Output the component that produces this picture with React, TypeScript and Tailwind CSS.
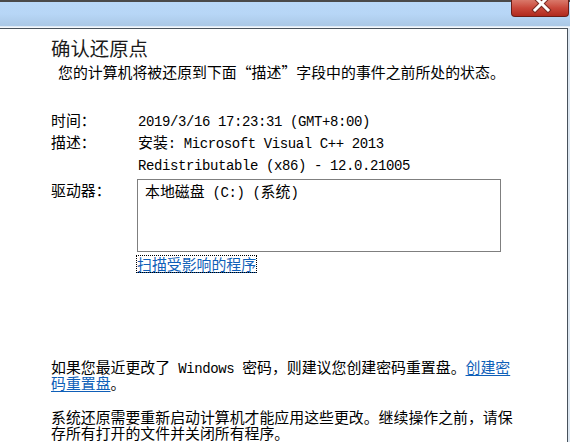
import React from "react";

const A = ({ children }: { children: React.ReactNode }) => (
  <span className="font-['Liberation_Mono',monospace] text-[14px] tracking-[-0.4px] leading-[0px]">{children}</span>
);

const Q = ({ children }: { children: React.ReactNode }) => (
  <span className="[font-feature-settings:'fwid']">{children}</span>
);

const Line = ({ h, children }: { h: string; children: React.ReactNode }) => (
  <div className={`${h} whitespace-nowrap`}>{children}</div>
);

export default function App() {
  return (
    <div className="relative w-[570px] h-[442px] overflow-hidden bg-white text-black font-['Noto_Sans_CJK_SC','Noto_Sans',sans-serif] text-[14.9px]">
      <div className="h-[2px] bg-[#4a4a4a]" />
      <div className="h-[24px] bg-gradient-to-b from-[#b9d8f8] via-[#b7d6f6] to-[#aac8e6]" />
      <div className="h-px bg-[#dfeaf5]" />
      <div className="h-px bg-[#f4f8fc]" />
      <div className="flex">
        <div className="w-[568px] h-[414px] border-t border-r border-[#48525c] bg-white pl-[51px] flex flex-col">
          <div className="mt-[6px] h-[26px] text-[19.4px] leading-[26px] text-[#1b1b1b] whitespace-nowrap">
            确认还原点
          </div>
          <div className="mt-px h-[20px] pl-[7px] leading-[20px] whitespace-nowrap">
            您的计算机将被还原到下面<Q>“</Q>描述<Q>”</Q>字段中的事件之前所处的状态。
          </div>

          <div className="mt-[27px] flex leading-[22px] whitespace-nowrap">
            <div className="w-[87px] flex flex-col">
              <div className="h-[22px]">时间：</div>
              <div className="h-[22px]">描述：</div>
            </div>
            <div className="flex flex-col">
              <div className="h-[22px]">
                <A>2019/3/16 17:23:31 (GMT+8:00)</A>
              </div>
              <div className="h-[22px]">
                安装<A>: Microsoft Visual C++ 2013</A>
              </div>
              <div className="h-[22px]">
                <A>Redistributable (x86) - 12.0.21005</A>
              </div>
            </div>
          </div>

          <div className="mt-[4px] flex whitespace-nowrap">
            <div className="w-[86px] h-[22px] leading-[22px]">驱动器：</div>
            <div className="flex flex-col items-start">
              <div className="w-[364px] h-[73px] border border-[#7f7f7f] pl-[7px] pt-[1px] leading-[20px]">
                <div className="h-[20px]">
                  本地磁盘<A> (C:) (</A>系统<A>)</A>
                </div>
              </div>
              <span className="mt-[4px] inline-block h-[16px] leading-[16px] text-[#0f5fb8] underline underline-offset-2 outline-1 outline-dotted outline-black">
                扫描受影响的程序
              </span>
            </div>
          </div>

          <div className="mt-[87px] leading-[16px]">
            <Line h="h-[16px]">
              如果您最近更改了<A> Windows </A>密码，则建议您创建密码重置盘。
              <span className="text-[#0f5fb8] underline underline-offset-2">创建密</span>
            </Line>
            <Line h="h-[16px]">
              <span className="text-[#0f5fb8] underline underline-offset-2">码重置盘</span>。
            </Line>
          </div>

          <div className="mt-[18px] leading-[16px]">
            <Line h="h-[16px]">系统还原需要重新启动计算机才能应用这些更改。继续操作之前，请保</Line>
            <Line h="h-[16px]">存所有打开的文件并关闭所有程序。</Line>
          </div>
        </div>
        <div className="flex-1 h-[414px] bg-[#dde7f1]" />
      </div>

      <div className="absolute left-[511px] top-0 w-[58px] h-[17px] rounded-b-[4px] border border-t-0 border-[#6b1d16] bg-gradient-to-b from-[#d9786a] via-[#c9473a] to-[#b0291d] overflow-hidden">
        <svg width="58" height="17" viewBox="0 0 58 17" className="block">
          <path d="M23 -3 L36 10 M36 -3 L23 10" stroke="#7a2a22" strokeWidth="5" strokeLinecap="square" fill="none" />
          <path d="M23 -3 L36 10 M36 -3 L23 10" stroke="#ffffff" strokeWidth="3" strokeLinecap="square" fill="none" />
        </svg>
      </div>
    </div>
  );
}
